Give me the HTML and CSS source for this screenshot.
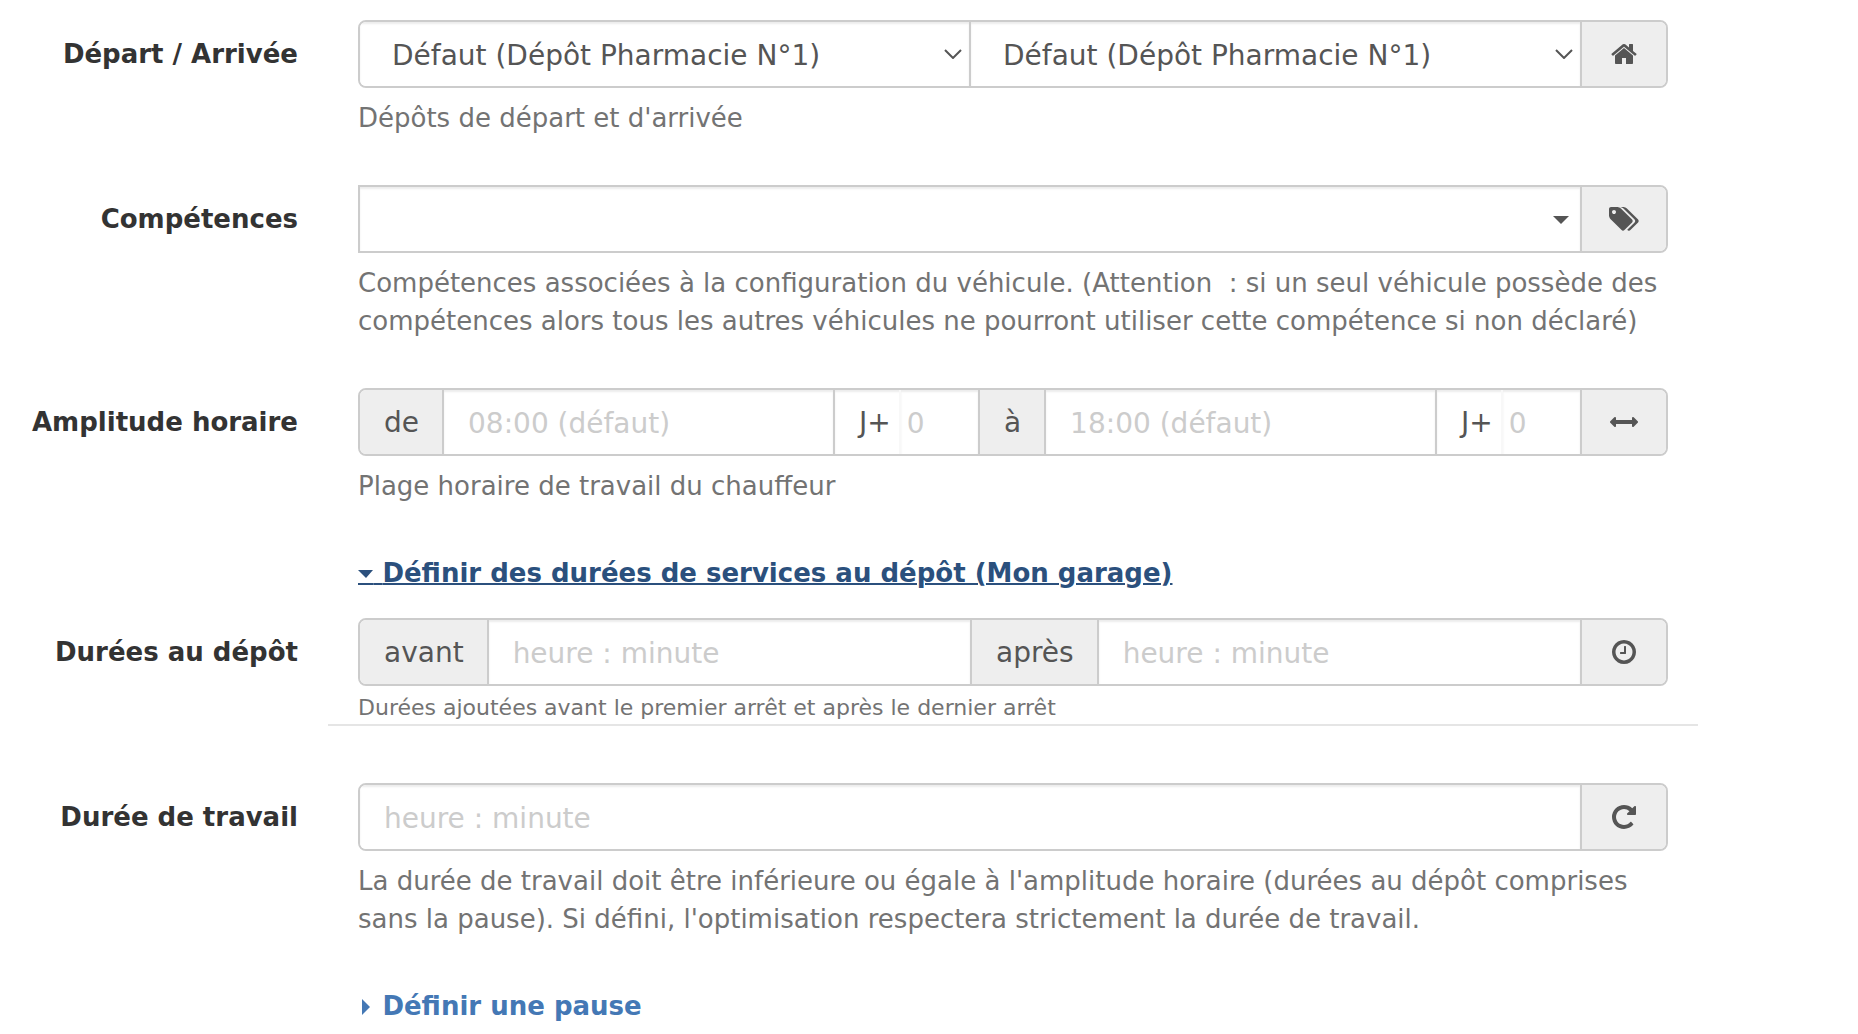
FILE: index.html
```html
<!DOCTYPE html>
<html lang="fr">
<head>
  <meta charset="UTF-8">
  <meta name="viewport" content="width=device-width, initial-scale=1.0">
  <title>Configuration du véhicule</title>
  <link rel="stylesheet" href="styles.css">
</head>
<body>

  <form class="vehicle-form">

    <!-- Start / stop stores -->
    <div class="form-group">
      <label class="control-label" for="store-start">Départ / Arrivée</label>
      <div class="field">
        <div class="input-group">
          <div class="select-box">
            <select id="store-start">
              <option>Défaut (Dépôt Pharmacie N°1)</option>
            </select>
            <svg class="chevron" viewBox="0 0 18 10"><path d="M1 1l8 8 8-8"/></svg>
          </div>
          <div class="select-box">
            <select id="store-stop" aria-label="Arrivée">
              <option>Défaut (Dépôt Pharmacie N°1)</option>
            </select>
            <svg class="chevron" viewBox="0 0 18 10"><path d="M1 1l8 8 8-8"/></svg>
          </div>
          <span class="addon addon-icon">
            <svg class="icon" viewBox="-64 0 1792 1792"><path d="M1408 992v480q0 26-19 45t-45 19H960v-384H704v384H320q-26 0-45-19t-19-45V992q0-1 .5-3t.5-3l575-474 575 474q1 2 1 6zm223-69l-62 74q-8 9-21 11h-3q-13 0-21-7L832 424l-692 577q-12 8-24 7-13-2-21-11l-62-74q-8-10-7-23.5t11-21.5l719-599q32-26 76-26t76 26l244 204V288q0-14 9-23t23-9h192q14 0 23 9t9 23v408l219 182q10 8 11 21.5t-7 23.5z"/></svg>
          </span>
        </div>
        <p class="help-block">Dépôts de départ et d'arrivée</p>
      </div>
    </div>

    <!-- Skills -->
    <div class="form-group">
      <label class="control-label" for="tags">Compétences</label>
      <div class="field">
        <div class="input-group square-left">
          <div class="select-box">
            <select id="tags">
              <option></option>
            </select>
            <svg class="select-caret" viewBox="0 0 16 8"><path d="M0 0h16L8 8z"/></svg>
          </div>
          <span class="addon addon-icon">
            <svg class="icon icon-wide" viewBox="0 0 1920 1792"><path d="M448 448q0-53-37.500-90.500T320 320t-90.500 37.500T192 448t37.500 90.500T320 576t90.500-37.500T448 448zm1067 576q0 53-37 90l-491 492q-39 37-91 37-53 0-90-37L91 890q-38-37-64.500-101T0 672V256q0-52 38-90t90-38h416q53 0 117 26.500T763 219l715 714q37 39 37 91zm384 0q0 53-37 90l-491 492q-39 37-91 37-36 0-59-14t-53-45l470-470q37-37 37-90 0-52-37-91L923 219q-38-38-102-64.500T704 128h224q53 0 117 26.500t102 64.500l715 714q37 39 37 91z"/></svg>
          </span>
        </div>
        <p class="help-block">Compétences associées à la configuration du véhicule. (Attention&nbsp; : si un seul véhicule possède des compétences alors tous les autres véhicules ne pourront utiliser cette compétence si non déclaré)</p>
      </div>
    </div>

    <!-- Working hours -->
    <div class="form-group">
      <label class="control-label" for="open">Amplitude horaire</label>
      <div class="field">
        <div class="input-group">
          <span class="addon">de</span>
          <input type="text" id="open" placeholder="08:00 (défaut)">
          <div class="days">
            <label for="open-day">J+</label>
            <input type="text" id="open-day" placeholder="0">
          </div>
          <span class="addon">à</span>
          <input type="text" id="close" placeholder="18:00 (défaut)" aria-label="Heure de fin">
          <div class="days">
            <label for="close-day">J+</label>
            <input type="text" id="close-day" placeholder="0">
          </div>
          <span class="addon addon-icon">
            <svg class="icon" viewBox="0 0 1792 1792"><path d="M1792 896q0 26-19 45l-256 256q-19 19-45 19t-45-19-19-45v-128H384v128q0 26-19 45t-45 19-45-19L19 941Q0 922 0 896t19-45l256-256q19-19 45-19t45 19 19 45v128h1024V640q0-26 19-45t45-19 45 19l256 256q19 19 19 45z"/></svg>
          </span>
        </div>
        <p class="help-block">Plage horaire de travail du chauffeur</p>
      </div>
    </div>

    <!-- Service durations at the store -->
    <div class="toggle-row">
      <a href="#store-durations" class="toggle open">
        <svg class="toggle-caret" viewBox="0 0 16 16"><path d="M0 4h15l-7 8z"/></svg>Définir des durées de services au dépôt (Mon garage)</a>
    </div>
    <div class="form-group store-durations" id="store-durations">
      <label class="control-label" for="service-start">Durées au dépôt</label>
      <div class="field">
        <div class="input-group">
          <span class="addon">avant</span>
          <input type="text" id="service-start" placeholder="heure : minute">
          <span class="addon">après</span>
          <input type="text" id="service-end" placeholder="heure : minute" aria-label="Durée après">
          <span class="addon addon-icon">
            <svg class="icon" viewBox="-128 0 1792 1792"><path d="M896 544v448q0 14-9 23t-23 9H544q-14 0-23-9t-9-23v-64q0-14 9-23t23-9h224V544q0-14 9-23t23-9h64q14 0 23 9t9 23zm416 352q0-148-73-273t-198-198-273-73-273 73-198 198-73 273 73 273 198 198 273 73 273-73 198-198 73-273zm224 0q0 209-103 385.500T1153.500 1561 768 1664t-385.500-103T103 1281.500 0 896t103-385.500T382.500 231 768 128t385.500 103T1433 510.500 1536 896z"/></svg>
          </span>
        </div>
        <p class="help-small">Durées ajoutées avant le premier arrêt et après le dernier arrêt</p>
      </div>
    </div>

    <!-- Work time -->
    <div class="form-group">
      <label class="control-label" for="work-time">Durée de travail</label>
      <div class="field">
        <div class="input-group">
          <input type="text" id="work-time" placeholder="heure : minute">
          <span class="addon addon-icon">
            <svg class="icon" viewBox="-128 0 1792 1792"><path d="M1536 256v448q0 26-19 45t-45 19h-448q-42 0-59-40-17-39 14-69l138-138q-148-137-349-137-104 0-198.500 40.500T406 534 296.500 697.500 256 896t40.500 198.500T406 1258t163.500 109.500T768 1408q119 0 225-52t179-147q7-10 23-12 15 0 25 9l137 138q9 8 9.500 20.500t-7.500 22.500q-109 132-264 204.500T768 1664q-156 0-298-61t-245-164-164-245T0 896t61-298 164-245 245-164 298-61q147 0 284.500 55.500T1297 340l130-129q29-31 70-14 39 17 39 59z"/></svg>
          </span>
        </div>
        <p class="help-block">La durée de travail doit être inférieure ou égale à l'amplitude horaire (durées au dépôt comprises sans la pause). Si défini, l'optimisation respectera strictement la durée de travail.</p>
      </div>
    </div>

    <!-- Rest -->
    <div class="toggle-row">
      <a href="#rest" class="toggle">
        <svg class="toggle-caret" viewBox="0 0 16 16"><path d="M4 0l8 8-8 8z"/></svg>Définir une pause</a>
    </div>

  </form>

</body>
</html>
```

FILE: styles.css
```css
* {
  box-sizing: border-box;
}

body {
  margin: 0;
  background-color: #fff;
  color: #333;
  font-family: Verdana, "DejaVu Sans", sans-serif;
  font-size: 26px;
  line-height: 38px;
}

p {
  margin: 0;
}

.vehicle-form {
  padding: 20px 160px 0 0;
}

/* Rows: label column + field column */
.form-group {
  display: grid;
  grid-template-columns: 328px 1fr;
  margin-bottom: 48px;
}

.control-label {
  padding: 15px 30px 0 0;
  font-weight: bold;
  text-align: right;
}

.field {
  padding: 0 30px;
}

.help-block {
  margin-top: 11px;
  color: #737373;
}

.help-small {
  padding-top: 5px;
  font-size: 22px;
  line-height: 33px;
  color: #737373;
}

/* Input groups */
.input-group {
  display: flex;
  height: 68px;
  border: 2px solid #ccc;
  border-radius: 8px;
  overflow: hidden;
  font-size: 28px;
  color: #555;
}

.input-group.square-left {
  border-radius: 0 8px 8px 0;
}

.input-group > * + * {
  border-left: 2px solid #ccc;
}

.input-group input,
.input-group select {
  width: 100%;
  min-width: 0;
  border: 0;
  border-radius: 0;
  outline: 0;
  background-color: #fff;
  box-shadow: inset 0 2px 2px rgba(0, 0, 0, 0.075);
  color: #555;
  font-family: inherit;
  font-size: 28px;
}

.input-group input {
  padding: 2px 24px 0;
}

.input-group > input {
  flex: 1;
}

.input-group > input + .addon,
.input-group > .addon + input {
  border-left: 2px solid #ccc;
}

.input-group input::placeholder {
  color: #ccc;
  opacity: 1;
}

.select-box {
  position: relative;
  flex: 1;
}

.select-box select {
  display: block;
  height: 100%;
  padding: 2px 48px 0 32px;
  appearance: none;
}

.chevron {
  position: absolute;
  top: 27px;
  right: 7px;
  width: 18px;
  height: 10px;
  fill: none;
  stroke: #555;
  stroke-width: 2;
  pointer-events: none;
}

.select-caret {
  position: absolute;
  top: 29px;
  right: 11px;
  width: 16px;
  height: 8px;
  fill: #555;
  pointer-events: none;
}

.addon {
  display: flex;
  align-items: center;
  justify-content: center;
  padding: 2px 23px 0 24px;
  background-color: #eee;
}

.addon-icon {
  width: 86px;
  padding: 0;
}

.icon {
  width: 28px;
  height: 28px;
  fill: #555;
}

.icon-wide {
  width: 30px;
}

.days {
  display: flex;
  width: 145px;
  box-shadow: inset 0 2px 2px rgba(0, 0, 0, 0.075);
}

.days label {
  display: flex;
  align-items: center;
  padding: 2px 8px 0 24px;
}

.days input {
  flex: 1;
  padding: 2px 6px 0;
  border-left: 2px solid #f8f8f8;
}

/* Collapse links */
.toggle-row {
  margin-bottom: 24px;
  padding: 1px 0 0 358px;
}

.toggle {
  position: relative;
  color: #4478b5;
  font-weight: bold;
  text-decoration: none;
}

/* room for the caret, underlined with the text */
.toggle::before {
  content: "\a0\a0";
  font-size: 22px;
}

.toggle.open {
  color: #2b507d;
  text-decoration: underline;
  text-decoration-thickness: 2px;
}

.toggle-caret {
  position: absolute;
  top: 8px;
  left: 0;
  width: 16px;
  height: 16px;
  fill: currentColor;
}

.store-durations {
  margin-bottom: 57px;
}

.store-durations .field {
  border-bottom: 2px solid #e5e5e5;
}
```
